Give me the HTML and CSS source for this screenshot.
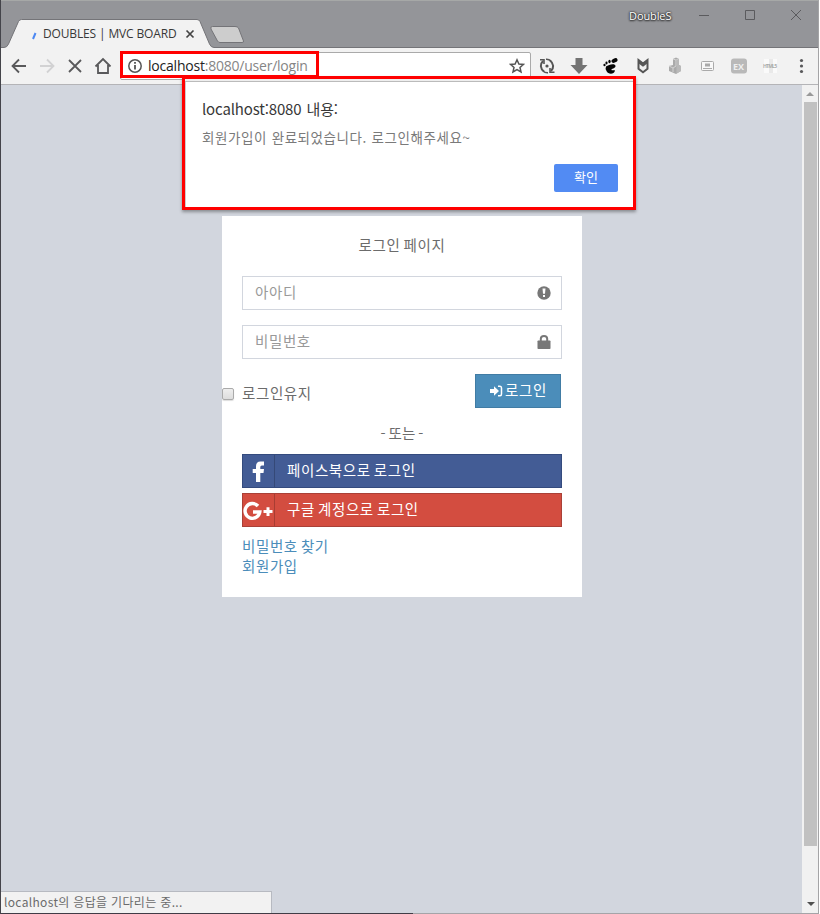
FILE: index.html
```html
<!DOCTYPE html>
<html lang="ko">
<head>
<meta charset="utf-8">
<title>DOUBLES | MVC BOARD</title>
<link rel="stylesheet" href="styles.css">
</head>
<body>
<div class="window">
  <header class="titlebar">
    <svg class="tabs" width="820" height="32" viewBox="0 0 820 32">
      <path d="M-2 30.500H4Q7 30.500 8.500 27L18.500 4.500Q19.500 2.500 21.500 2.500H197Q199 2.500 200 4.500L209.500 27Q211 30.500 214 30.500H822V33H-2Z" fill="#f2f2f2" stroke="#747478"/>
      <path d="M212.500 9.500H235Q237.500 9.500 238.500 11L243.500 24Q244 25.500 242 25.500H220Q218.500 25.500 217.500 24L211 12Q210 9.500 212.500 9.500Z" fill="#cdcdcd" stroke="#747478"/>
      <path d="M35.500 16L33 22" stroke="#4b87f2" stroke-width="2"/>
      <path d="M186.500 13.500L193.500 20.500M193.500 13.500L186.500 20.500" stroke="#444" stroke-width="1.700"/>
    </svg>
    <span class="tab-title">DOUBLES | MVC BOARD</span>
    <span class="profile">DoubleS</span>
    <svg class="controls" width="110" height="14" viewBox="0 0 110 14" fill="none" stroke="#5b5b5e"><path d="M4 7.500H14M50.500 2.500H59.500V11.500H50.500ZM96 2L106 12M106 2L96 12"/></svg>
  </header>
  <nav class="toolbar">
    <svg class="nav-icons" width="112" height="36" viewBox="0 0 112 36" fill="none" stroke-width="1.800">
      <path d="M26 18H12.500M19 11.500L12.500 18L19 24.500" stroke="#59595b"/>
      <path d="M40 18H53.500M47 11.500L53.500 18L47 24.500" stroke="#d2d2d3"/>
      <path d="M69 12L81 24M81 12L69 24" stroke="#59595b"/>
      <path d="M95.500 18.500L103 11L110.500 18.500M98 17V25H108V17" stroke="#59595b"/>
    </svg>
    <div class="omnibox">
      <svg width="16" height="16" viewBox="0 0 16 16" fill="none" stroke="#555" stroke-width="1.500"><circle cx="8" cy="8" r="6.200"/><path d="M8 7V11.500M8 4V5.700" stroke-width="1.800"/></svg>
      <span class="url"><b>localhost</b>:8080/user/login</span>
      <svg class="star" width="16" height="16" viewBox="0 0 16 16" fill="none" stroke="#555" stroke-width="1.500"><path d="M8 1.800L9.900 6L14.400 6.400L11 9.400L12 13.900L8 11.500L4 13.900L5 9.400L1.600 6.400L6.100 6Z"/></svg>
    </div>
    <svg class="extensions" width="280" height="36" viewBox="0 0 280 36">
      <g fill="none" stroke="#555" stroke-width="2"><path d="M11 13C8 16 8 20.500 12 23.500M19 23C22 20 22 15.500 18 12.500"/><path d="M8 11.800H12V16M22.500 24.200H18V20" stroke-width="1.600"/><path d="M14 11.200Q17 11 19 13M16 24.800Q13 25 11 23" stroke-width="1.600"/></g><circle cx="15" cy="18" r="1.600" fill="#555"/>
      <path d="M43.500 10H50.500V17H55.500L47 26L38.500 17H43.500Z" fill="#737373"/>
      <g fill="#050505"><path d="M74 18.500C77 16 83.500 15 83.500 18C83.500 21 79 20 79.500 22C80 23 82 21.500 83 22.500C82 27 76 26.500 74.500 23Q73 20.500 74 18.500Z"/><ellipse cx="82.500" cy="12.500" rx="3.200" ry="2" transform="rotate(-25 82.500 12.500)"/><ellipse cx="77.500" cy="13.500" rx="1.200" ry="1.700"/><ellipse cx="74.500" cy="15" rx="1.100" ry="1.400"/><ellipse cx="72.500" cy="17" rx="1.100" ry="1.200"/></g>
      <path d="M106.500 12L111 15.500L115.500 12V20.800L111 24.200L106.500 20.800Z" fill="#eee" stroke="#555" stroke-width="2"/><path d="M106 11L111 15.300L116 11V15L111 18.800L106 15Z" fill="#555"/>
      <g><path d="M141 11L144 9.500L147 11V17L149 18V23L144 26L137 23V18L141 17Z" fill="#aaa"/><path d="M141 11L144 12L147 11M144 12V18M137 18L141 20L144 18M141 20V24" fill="none" stroke="#d3d3d3"/><path d="M144.500 12L147 11V17L149 18V23L144.500 25.500Z" fill="#b9b9b9"/></g>
      <rect x="169.500" y="13.500" width="12" height="9" rx="1" fill="#f8f8f8" stroke="#aaa"/><path d="M173 15.500H178V18.500H173ZM171 20H180V21H171Z" fill="#aaa"/>
      <rect x="199" y="10.500" width="16" height="15" rx="3" fill="#b9b9b9"/><text x="201" y="21.500" class="ext-text">EX</text>
      <path d="M232 11H237V25H232ZM240 11H245V25H240Z" fill="#fafafa"/><path d="M237 11H241V25H237Z" fill="#e9e9e9"/><text x="231" y="20" textLength="14" class="ext-small">HTML5</text>
      <g fill="#58585a"><circle cx="269.500" cy="12.500" r="1.600"/><circle cx="269.500" cy="18" r="1.600"/><circle cx="269.500" cy="23.500" r="1.600"/></g>
    </svg>
  </nav>
  <div class="viewport">
    <main class="page">
      <form class="login">
        <p class="heading">로그인 페이지</p>
        <div class="field"><span>아아디</span><svg width="14" height="14" viewBox="0 0 14 14"><circle cx="7" cy="7" r="6.700" fill="#777"/><path d="M5.500 2.500H8.500L8 7.700H6ZM6 9H8V11H6Z" fill="#fff"/></svg></div>
        <div class="field"><span>비밀번호</span><svg width="14" height="14" viewBox="0 0 14 14"><path d="M3.800 7V3.800Q3.800 1 7 1Q10.200 1 10.200 3.800V7" fill="none" stroke="#777" stroke-width="2"/><rect x=".5" y="5.500" width="13" height="8.500" rx=".8" fill="#777"/></svg></div>
        <div class="login-row">
          <span class="checkbox"></span><span class="remember">로그인유지</span>
          <span class="submit"><svg width="14" height="12" viewBox="0 0 14 12"><path d="M1 4H5V1.300L10 6L5 10.700V8H1Z" fill="#fff"/><path d="M9 1.200H11Q12.500 1.200 12.500 3V9Q12.500 10.800 11 10.800H9" fill="none" stroke="#fff" stroke-width="1.500"/></svg><span>로그인</span></span>
        </div>
        <p class="or">- 또는 -</p>
        <div class="social facebook"><span class="badge"><svg width="31" height="32" viewBox="0 0 31 32"><path d="M13 27V18H9.700V14H13V11.300Q13 6.600 17.500 6.600H21V10.500H18.800Q17.300 10.500 17.300 12V14H21L20.500 18H17.300V27Z" fill="#fff"/></svg></span><span>페이스북으로 로그인</span></div>
        <div class="social google"><span class="badge"><svg width="31" height="32" viewBox="0 0 31 32"><path d="M15 12A7.400 7.400 0 1 0 16.800 18H10" fill="none" stroke="#fff" stroke-width="3.400"/><path d="M23.500 13.300H26.500V16H29.500V19H26.500V22H23.500V19H20.500V16H23.500Z" fill="#fff"/></svg></span><span>구글 계정으로 로그인</span></div>
        <div class="links"><a>비밀번호 찾기</a><a>회원가입</a></div>
      </form>
    </main>
    <div class="scrollbar"><i class="up"></i><i class="thumb"></i><i class="down"></i></div>
  </div>
  <div class="dialog">
    <div class="dialog-title">localhost:8080 내용:</div>
    <div class="dialog-message">회원가입이 완료되었습니다. 로그인해주세요~</div>
    <div class="confirm">확인</div>
  </div>
  <div class="url-highlight"></div>
  <div class="status">localhost의 응답을 기다리는 중...</div>
</div>
</body>
</html>
```
FILE: styles.css
```css
* { box-sizing: border-box; }
body { margin: 0; background: #fff; font-family: "Noto Sans CJK KR", sans-serif; }
p { margin: 0; }
.window { position: relative; width: 819px; height: 914px; overflow: hidden; display: flex; flex-direction: column; border-left: 1px solid #44444a; border-right: 1px solid #a4a4a6; padding-bottom: 1px; background: linear-gradient(90deg, #403c46 412px, #a5a4a8 412px); white-space: nowrap; }
.titlebar { position: relative; height: 48px; flex: none; background: #949599; border-top: 1px solid #a6a8a7; }
.tabs { position: absolute; left: -1px; top: 16px; }
.tab-title { position: absolute; left: 42px; top: 24px; font: 12px/18px "Open Sans", sans-serif; color: #383838; letter-spacing: -.15px; }
.profile { position: absolute; left: 628px; top: 7px; font: 11px/16px "Open Sans", sans-serif; letter-spacing: -.1px; color: #fff; text-shadow: 0 0 2px #222, 0 0 2px #333, 0 1px 2px #333; }
.controls { position: absolute; left: 694px; top: 7px; }
.toolbar { height: 37px; flex: none; display: flex; background: #f2f2f2; border-bottom: 1px solid #b4b4b7; }
.nav-icons { flex: none; margin-left: -1px; }
.omnibox { display: flex; align-items: center; flex: none; width: 411px; height: 28px; margin: 4px 0 0 8px; padding: 0 5px 0 6px; background: #fff; border: 1px solid #aaa; border-radius: 2px; }
.url { margin-left: 5px; font: 14px/20px "Open Sans", sans-serif; letter-spacing: -.22px; color: #858585; }
.url b { font-weight: 400; color: #222; }
.star { margin-left: auto; }
.extensions { flex: none; margin-left: 1px; }
.ext-text { font: bold 9px "Open Sans", sans-serif; fill: #eee; }
.ext-small { font: bold 5px "Open Sans", sans-serif; fill: #aaa; }
.viewport { flex: 1; display: flex; background: #d2d6de; }
.page { flex: 1; padding: 131px 0 0 221px; }
.login { width: 360px; height: 381px; padding: 20px; background: #fff; color: #6b6b6b; font-size: 14.500px; line-height: 20px; letter-spacing: .6px; word-spacing: -1.500px; }
.heading { height: 40px; margin-top: -1px; margin-bottom: 1px; text-align: center; }
.field { display: flex; align-items: center; justify-content: space-between; height: 34px; margin-bottom: 15px; padding: 0 10px 2px 12px; border: 1px solid #d2d6de; color: #999; }
.field svg { position: relative; top: 1px; }
.login-row { display: flex; height: 34px; margin-left: -20px; align-items: center; }
.checkbox { width: 12px; height: 12px; margin-top: 5px; border: 1px solid #aaa; border-radius: 2px; background: linear-gradient(#eee, #ddd); box-shadow: 0 1px 1px #ddd; }
.remember { margin: 4px 0 0 8px; }
.submit { display: flex; align-items: center; width: 86px; height: 34px; margin: 0 1px 0 auto; padding: 0 0 2px 13px; gap: 2px; border: 1px solid #417ca4; background: #4b8dba; color: #fff; }
.submit svg { position: relative; top: 1px; }
.or { margin: 15px 0 11px; text-align: center; letter-spacing: .2px; }
.social { display: flex; align-items: center; height: 34px; margin-bottom: 5px; color: #fff; border: 1px solid; }
.social > span:last-child { position: relative; top: -1px; }
.facebook { background: #435c95; border-color: #344b7e; }
.google { background: #d34d40; border-color: #aa4037; }
.badge { width: 32px; height: 32px; margin-right: 12px; border-right: 1px solid rgba(0,0,0,.2); }
.badge svg { display: block; }
.links { display: flex; flex-direction: column; margin-top: 9px; color: #4b8dba; }
.scrollbar { display: flex; flex-direction: column; align-items: center; width: 16px; background: #f1f1f1; }
.up, .down { width: 0; height: 0; border: 4px solid transparent; }
.up { margin-top: 3px; border-bottom-color: #999; }
.thumb { width: 13px; height: 744px; margin-top: 6px; background: #c1c1c1; }
.down { margin: 56px 0 0 1px; border-top-color: #505050; }
.dialog { position: absolute; left: 181px; top: 76px; width: 454px; height: 134px; padding: 20px 15px 0 17px; background: #fff; border: 3px solid #f00; box-shadow: inset 0 2px #eee, inset 0 3px #bbb, inset 1px 0 #ccc, 0 2px 3px rgba(0,0,0,.35); }
.dialog-title { color: #383838; font: 15px/20px "Noto Sans CJK KR", sans-serif; letter-spacing: -.15px; word-spacing: 1px; }
.dialog-message { margin-top: 9px; color: #7a7a7a; font: 13.500px/18px "Noto Sans CJK KR", sans-serif; letter-spacing: .55px; word-spacing: .5px; }
.confirm { width: 64px; height: 28px; margin: 18px 0 0 auto; border-radius: 2px; background: #528bf3; color: #fff; font-size: 13px; line-height: 26px; text-align: center; }
.url-highlight { position: absolute; left: 119px; top: 51px; width: 199px; height: 27px; border: 3px solid #f00; }
.status { position: absolute; left: 0; bottom: 1px; width: 271px; height: 22px; padding-left: 3px; border: 1px solid #b7bac1; border-left: 0; border-bottom: 0; background: #f2f2f2; color: #6b6b6b; font-size: 12px; line-height: 20px; letter-spacing: .33px; }
```
